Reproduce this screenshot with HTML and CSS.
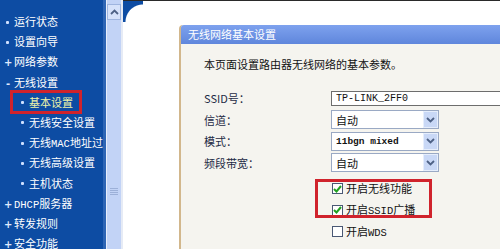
FILE: index.html
```html
<!DOCTYPE html>
<html lang="zh-CN">
<head>
<meta charset="utf-8">
<link rel="stylesheet" href="styles.css">
</head>
<body>
<div class="page">
  <nav class="sidebar">
    <ul class="menu">
      <li class="top"><span class="dot"></span>运行状态</li>
      <li class="top"><span class="dot"></span>设置向导</li>
      <li class="top"><span class="plus">+</span>网络参数</li>
      <li class="top"><span class="minus">-</span>无线设置</li>
      <li class="sub active"><span class="dot"></span>基本设置<span class="mark-side"></span></li>
      <li class="sub"><span class="dot"></span>无线安全设置</li>
      <li class="sub"><span class="dot"></span>无线<span class="mono">MAC</span>地址过滤</li>
      <li class="sub"><span class="dot"></span>无线高级设置</li>
      <li class="sub"><span class="dot"></span>主机状态</li>
      <li class="top"><span class="plus">+</span><span class="mono">DHCP</span>服务器</li>
      <li class="top"><span class="plus">+</span>转发规则</li>
      <li class="top"><span class="plus">+</span>安全功能</li>
    </ul>
  </nav>
  <div class="scrollbar">
    <div class="sb-btn">
      <svg width="9" height="6" viewBox="0 0 9 6"><path d="M1 5 L4.5 1.5 L8 5" fill="none" stroke="#4d6185" stroke-width="1.8"/></svg>
    </div>
    <div class="sb-track">
      <div class="sb-grip"><i></i><i></i><i></i><i></i></div>
    </div>
  </div>
  <main class="main">
    <div class="corner"></div>
    <section class="panel">
      <div class="panel-head">无线网络基本设置</div>
      <div class="panel-body">
        <p class="desc">本页面设置路由器无线网络的基本参数。</p>
        <div class="form">
          <div class="row ssid-row"><label>SSID号：</label><div class="input">TP-LINK_2FF0</div></div>
          <div class="row"><label>信道：</label><div class="select"><span>自动</span><b class="arr"><svg width="9" height="6" viewBox="0 0 9 6"><path d="M1 1 L4.5 4.5 L8 1" fill="none" stroke="#4d6185" stroke-width="1.8"/></svg></b></div></div>
          <div class="row"><label>模式：</label><div class="select"><span class="mono small">11bgn mixed</span><b class="arr"><svg width="9" height="6" viewBox="0 0 9 6"><path d="M1 1 L4.5 4.5 L8 1" fill="none" stroke="#4d6185" stroke-width="1.8"/></svg></b></div></div>
          <div class="row"><label>频段带宽：</label><div class="select"><span>自动</span><b class="arr"><svg width="9" height="6" viewBox="0 0 9 6"><path d="M1 1 L4.5 4.5 L8 1" fill="none" stroke="#4d6185" stroke-width="1.8"/></svg></b></div></div>
          <div class="checks">
            <div class="check"><span class="box on"><svg width="9" height="8" viewBox="0 0 9 8"><path d="M1 4 L3.5 6.5 L8 1" fill="none" stroke="#21a121" stroke-width="2"/></svg></span>开启无线功能</div>
            <div class="check"><span class="box on"><svg width="9" height="8" viewBox="0 0 9 8"><path d="M1 4 L3.5 6.5 L8 1" fill="none" stroke="#21a121" stroke-width="2"/></svg></span>开启<span class="mono">SSID</span>广播</div>
            <div class="check"><span class="box"></span>开启<span class="mono">WDS</span></div>
            <div class="mark-checks"></div>
          </div>
        </div>
      </div>
    </section>
  </main>
</div>
</body>
</html>
```
FILE: styles.css
```css
html, body {
  margin: 0;
  padding: 0;
  width: 500px;
  height: 249px;
  overflow: hidden;
  background: #ffffff;
  font-family: "Noto Sans CJK SC", "Noto Sans", sans-serif;
  font-size: 11px;
}

.page {
  display: flex;
  height: 249px;
}

.mono {
  font-family: "Liberation Mono", "DejaVu Sans Mono", monospace;
  font-size: 10.5px;
}

.mono.small {
  font-size: 9.5px;
  font-weight: bold;
}

.sidebar {
  width: 103px;
  flex: none;
  background: #0d4ca3;
  border-right: 3px solid #2e65b4;
  color: #ffffff;
  overflow: hidden;
}

.menu {
  list-style: none;
  margin: 0;
  padding: 11px 0 0 0;
}

.menu li {
  position: relative;
  height: 20.2px;
  line-height: 20.2px;
  white-space: nowrap;
}

.menu li.top { padding-left: 4px; }
.menu li.sub { padding-left: 19px; }

.menu .dot {
  display: inline-block;
  vertical-align: middle;
  width: 3px;
  height: 3px;
  background: #cfe0ff;
  border-radius: 1px;
  margin: 0 5px 2px 2px;
}

.menu .plus, .menu .minus {
  display: inline-block;
  width: 8px;
  margin-right: 2px;
  font-family: "DejaVu Sans", sans-serif;
  font-weight: bold;
  font-size: 10px;
  text-align: center;
  color: #dfe9ff;
}

.menu li.active { color: #eef3a8; }

.mark-side {
  position: absolute;
  left: 10px;
  top: -2px;
  width: 66px;
  height: 18px;
  border: 3px solid #d0232c;
}

.scrollbar {
  width: 14px;
  flex: none;
  background: #c2d3f6;
  border-left: 1px solid #e8eefb;
  border-right: 2px solid #e6ebf5;
  display: flex;
  flex-direction: column;
}

.sb-btn {
  margin-top: 4px;
  height: 14px;
  border: 1px solid #9fb5df;
  background: #d6e2fa;
  display: flex;
  align-items: center;
  justify-content: center;
}

.sb-track {
  flex: 1;
  display: flex;
  flex-direction: column;
  align-items: center;
  justify-content: flex-end;
  padding-bottom: 54px;
}

.sb-grip {
  display: flex;
  flex-direction: column;
  gap: 1px;
}

.sb-grip i {
  display: block;
  width: 8px;
  height: 1px;
  background: #9cb0d8;
}

.main {
  position: relative;
  flex: 1;
  min-width: 0;
  border-top: 1px solid #2a2a2a;
  padding: 24px 0 0 56px;
  overflow: hidden;
  background: #ffffff;
}

.corner {
  position: absolute;
  left: 0;
  top: -1px;
  width: 20px;
  height: 22px;
  background: radial-gradient(circle at 100% 100%, transparent 17px, #0d4ca3 18px);
}

.panel {
  width: 340px;
  height: 240px;
  border-left: 2px solid #d2b78c;
  border-top-left-radius: 4px;
  background: #f5f4ef;
}

.panel-head {
  height: 19px;
  line-height: 19px;
  padding-left: 7px;
  color: #ffffff;
  background: linear-gradient(#7ea2ee, #5f86dc);
  border-top-left-radius: 3px;
}

.panel-body {
  padding: 0 0 0 23px;
}

.desc {
  margin: 0;
  height: 24px;
  padding-top: 8px;
  line-height: 24px;
  color: #111;
}

.form {
  position: relative;
  padding-top: 11px;
}

.row {
  display: flex;
  align-items: center;
  height: 21.5px;
}

.row label {
  width: 127px;
  flex: none;
  color: #1d2a44;
}

.ssid-row { height: 22px; }

.input {
  width: 200px;
  height: 13px;
  line-height: 13px;
  border: 1px solid #6d6d6d;
  border-right: none;
  background: #ffffff;
  padding-left: 4px;
  font-family: "Liberation Mono", monospace;
  font-size: 10px;
  color: #111;
}

.select {
  width: 108px;
  height: 19px;
  border: 1px solid #9aa9c4;
  background: #ffffff;
  display: flex;
  align-items: center;
  justify-content: space-between;
  padding-left: 4px;
  box-sizing: border-box;
  color: #111;
}

.select .arr {
  width: 15px;
  height: 17px;
  background: #c9d8f6;
  border: 1px solid #e6eefc;
  box-sizing: border-box;
  display: flex;
  align-items: center;
  justify-content: center;
}

.checks {
  position: relative;
  padding: 4px 0 0 128px;
}

.check {
  height: 21.5px;
  line-height: 21.5px;
  white-space: nowrap;
  color: #111;
}

.box {
  display: inline-flex;
  vertical-align: middle;
  width: 11px;
  height: 11px;
  border: 1px solid #4a5874;
  background: #ffffff;
  margin: 0 3px 2px 0;
  box-sizing: border-box;
  align-items: center;
  justify-content: center;
}

.mark-checks {
  position: absolute;
  left: 111px;
  top: 5px;
  width: 111px;
  height: 33px;
  border: 3px solid #d0232c;
}
```
